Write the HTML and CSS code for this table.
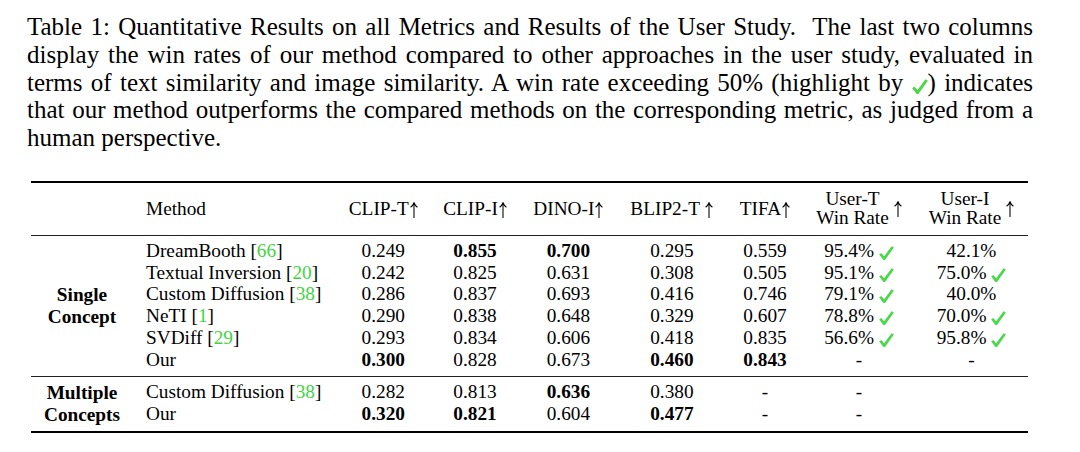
FILE: index.html
```html
<!DOCTYPE html>
<html lang="en">
<head>
<meta charset="utf-8">
<title>Table 1</title>
<link rel="stylesheet" href="styles.css">
</head>
<body>
<div class="page">
  <p class="caption">
    <span class="line">Table 1: Quantitative Results on all Metrics and Results of the User Study.&nbsp; The last two columns</span>
    <span class="line">display the win rates of our method compared to other approaches in the user study, evaluated in</span>
    <span class="line">terms of text similarity and image similarity. A win rate exceeding 50% (highlight by <svg class="chk" viewBox="0 0 15 14" aria-label="check"><path d="M0.2 8.6 L2.2 7.0 L5.2 10.2 L12.6 0.2 L14.9 1.6 L6.0 14 L4.4 14 Z"/></svg>) indicates</span>
    <span class="line">that our method outperforms the compared methods on the corresponding metric, as judged from a</span>
    <span class="line last">human perspective.</span>
  </p>

  <table class="results">
    <colgroup>
      <col class="c-group">
      <col class="c-method">
      <col class="c-clipt">
      <col class="c-clipi">
      <col class="c-dino">
      <col class="c-blip">
      <col class="c-tifa">
      <col class="c-usert">
      <col class="c-useri">
    </colgroup>
    <thead>
      <tr>
        <th></th>
        <th class="method">Method</th>
        <th>CLIP-T<svg class="up" viewBox="0 0 8 16"><path d="M4 16 V1.2 M0.6 5.2 Q3 3.6 4 0.8 Q5 3.6 7.4 5.2"/></svg></th>
        <th>CLIP-I<svg class="up" viewBox="0 0 8 16"><path d="M4 16 V1.2 M0.6 5.2 Q3 3.6 4 0.8 Q5 3.6 7.4 5.2"/></svg></th>
        <th>DINO-I<svg class="up" viewBox="0 0 8 16"><path d="M4 16 V1.2 M0.6 5.2 Q3 3.6 4 0.8 Q5 3.6 7.4 5.2"/></svg></th>
        <th>BLIP2-T <svg class="up" viewBox="0 0 8 16"><path d="M4 16 V1.2 M0.6 5.2 Q3 3.6 4 0.8 Q5 3.6 7.4 5.2"/></svg></th>
        <th>TIFA<svg class="up" viewBox="0 0 8 16"><path d="M4 16 V1.2 M0.6 5.2 Q3 3.6 4 0.8 Q5 3.6 7.4 5.2"/></svg></th>
        <th><div class="hdr"><span class="stack"><span>User-T</span><span>Win Rate</span></span><svg class="up" viewBox="0 0 8 16"><path d="M4 16 V1.2 M0.6 5.2 Q3 3.6 4 0.8 Q5 3.6 7.4 5.2"/></svg></div></th>
        <th><div class="hdr"><span class="stack"><span>User-I</span><span>Win Rate</span></span><svg class="up" viewBox="0 0 8 16"><path d="M4 16 V1.2 M0.6 5.2 Q3 3.6 4 0.8 Q5 3.6 7.4 5.2"/></svg></div></th>
      </tr>
    </thead>
    <tbody class="single">
      <tr class="first">
        <td class="group" rowspan="6">Single<br>Concept</td>
        <td class="method">DreamBooth [<span class="cite">66</span>]</td>
        <td>0.249</td><td><b>0.855</b></td><td><b>0.700</b></td><td>0.295</td><td>0.559</td>
        <td>95.4% <svg class="chk" viewBox="0 0 15 14"><path d="M0.2 8.6 L2.2 7.0 L5.2 10.2 L12.6 0.2 L14.9 1.6 L6.0 14 L4.4 14 Z"/></svg></td>
        <td>42.1%</td>
      </tr>
      <tr>
        <td class="method">Textual Inversion [<span class="cite">20</span>]</td>
        <td>0.242</td><td>0.825</td><td>0.631</td><td>0.308</td><td>0.505</td>
        <td>95.1% <svg class="chk" viewBox="0 0 15 14"><path d="M0.2 8.6 L2.2 7.0 L5.2 10.2 L12.6 0.2 L14.9 1.6 L6.0 14 L4.4 14 Z"/></svg></td>
        <td>75.0% <svg class="chk" viewBox="0 0 15 14"><path d="M0.2 8.6 L2.2 7.0 L5.2 10.2 L12.6 0.2 L14.9 1.6 L6.0 14 L4.4 14 Z"/></svg></td>
      </tr>
      <tr>
        <td class="method">Custom Diffusion [<span class="cite">38</span>]</td>
        <td>0.286</td><td>0.837</td><td>0.693</td><td>0.416</td><td>0.746</td>
        <td>79.1% <svg class="chk" viewBox="0 0 15 14"><path d="M0.2 8.6 L2.2 7.0 L5.2 10.2 L12.6 0.2 L14.9 1.6 L6.0 14 L4.4 14 Z"/></svg></td>
        <td>40.0%</td>
      </tr>
      <tr>
        <td class="method">NeTI [<span class="cite">1</span>]</td>
        <td>0.290</td><td>0.838</td><td>0.648</td><td>0.329</td><td>0.607</td>
        <td>78.8% <svg class="chk" viewBox="0 0 15 14"><path d="M0.2 8.6 L2.2 7.0 L5.2 10.2 L12.6 0.2 L14.9 1.6 L6.0 14 L4.4 14 Z"/></svg></td>
        <td>70.0% <svg class="chk" viewBox="0 0 15 14"><path d="M0.2 8.6 L2.2 7.0 L5.2 10.2 L12.6 0.2 L14.9 1.6 L6.0 14 L4.4 14 Z"/></svg></td>
      </tr>
      <tr>
        <td class="method">SVDiff [<span class="cite">29</span>]</td>
        <td>0.293</td><td>0.834</td><td>0.606</td><td>0.418</td><td>0.835</td>
        <td>56.6% <svg class="chk" viewBox="0 0 15 14"><path d="M0.2 8.6 L2.2 7.0 L5.2 10.2 L12.6 0.2 L14.9 1.6 L6.0 14 L4.4 14 Z"/></svg></td>
        <td>95.8% <svg class="chk" viewBox="0 0 15 14"><path d="M0.2 8.6 L2.2 7.0 L5.2 10.2 L12.6 0.2 L14.9 1.6 L6.0 14 L4.4 14 Z"/></svg></td>
      </tr>
      <tr class="last">
        <td class="method">Our</td>
        <td><b>0.300</b></td><td>0.828</td><td>0.673</td><td><b>0.460</b></td><td><b>0.843</b></td>
        <td>-</td>
        <td>-</td>
      </tr>
    </tbody>
    <tbody class="multi">
      <tr class="first">
        <td class="group" rowspan="2">Multiple<br>Concepts</td>
        <td class="method">Custom Diffusion [<span class="cite">38</span>]</td>
        <td>0.282</td><td>0.813</td><td><b>0.636</b></td><td>0.380</td><td>-</td>
        <td>-</td>
        <td></td>
      </tr>
      <tr class="last">
        <td class="method">Our</td>
        <td><b>0.320</b></td><td><b>0.821</b></td><td>0.604</td><td><b>0.477</b></td><td>-</td>
        <td>-</td>
        <td></td>
      </tr>
    </tbody>
  </table>
</div>
</body>
</html>
```

FILE: styles.css
```css
html, body {
  margin: 0;
  background: #ffffff;
}

body {
  font-family: "Liberation Serif", "Times New Roman", serif;
  color: #000;
}

.page {
  padding-top: 13px;
}

.caption {
  margin: 0 0 0 27px;
  width: 1006px;
  font-size: 25px;
  line-height: 27.8px;
}

.caption .line {
  display: block;
  text-align: justify;
  text-align-last: justify;
}

.caption .line.last {
  text-align: left;
  text-align-last: left;
}

.chk {
  display: inline-block;
  width: 15px;
  height: 14px;
  vertical-align: -3px;
  fill: #4ad84a;
}

.caption .chk {
  width: 16px;
  height: 15px;
}

.up {
  display: inline-block;
  width: 8px;
  height: 16px;
  vertical-align: -3px;
  margin-left: 1px;
  fill: none;
  stroke: #000;
  stroke-width: 1.05;
}

.cite {
  color: #3fd43f;
}

.results {
  margin: 29px 0 0 31px;
  width: 997px;
  table-layout: fixed;
  border-collapse: separate;
  border-spacing: 0;
  font-size: 19.3px;
}

.c-group { width: 102px; }
.c-method { width: 203.5px; }
.c-clipt { width: 93.5px; }
.c-clipi { width: 90px; }
.c-dino { width: 96.75px; }
.c-blip { width: 110.25px; }
.c-tifa { width: 76px; }
.c-usert { width: 112px; }
.c-useri { width: 113px; }

.results th,
.results td {
  padding: 0;
  text-align: center;
  white-space: nowrap;
  line-height: 21.7px;
}

.results th {
  font-weight: normal;
  height: 55px;
  box-sizing: border-box;
  vertical-align: middle;
  border-top: 2px solid #000;
  border-bottom: 1px solid #222;
}

.results .method {
  text-align: left;
  padding-left: 13px;
}

.hdr {
  display: flex;
  align-items: center;
  justify-content: center;
  gap: 5px;
}

.hdr .up {
  margin-left: 0;
  margin-top: 1px;
}

.stack {
  display: flex;
  flex-direction: column;
  align-items: center;
  line-height: 18.5px;
}

.results td {
  vertical-align: middle;
}

.results td.group {
  font-weight: bold;
  vertical-align: middle;
}

.results tr.first td:not(.group) {
  padding-top: 4px;
}

.results tr.last td:not(.group) {
  padding-bottom: 6px;
}

.results tbody.multi tr.first td {
  border-top: 1px solid #222;
}

.results tbody.multi tr.last td,
.results tbody.multi td.group {
  border-bottom: 2px solid #000;
}
```
